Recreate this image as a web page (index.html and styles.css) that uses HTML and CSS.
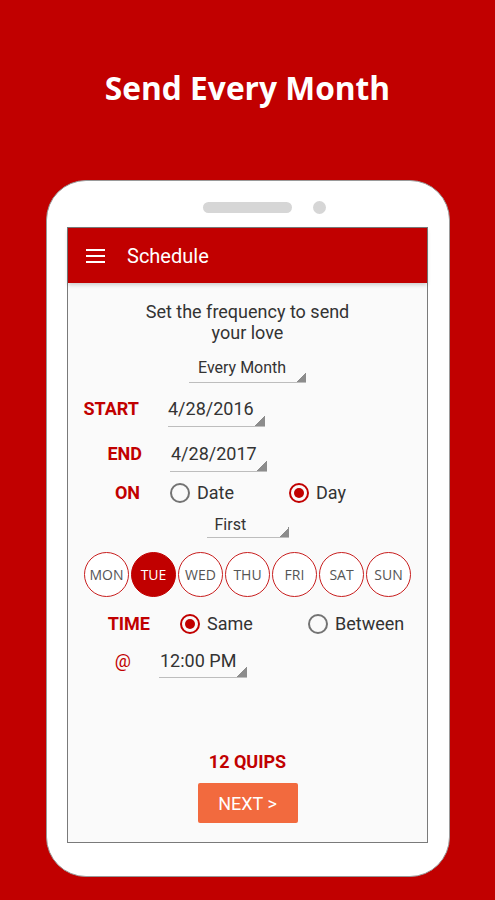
FILE: index.html
```html
<!DOCTYPE html>
<html>
<head>
<meta charset="utf-8">
<link rel="stylesheet" href="styles.css">
</head>
<body>
<h1 class="headline">Send Every Month</h1>
<div class="phone">
  <div class="sensors"><span class="speaker"></span><span class="camera"></span></div>
  <div class="screen">
    <header class="appbar">
      <svg class="menu" width="19" height="14" viewBox="0 0 19 14"><path d="M0 1H19M0 7H19M0 13H19" stroke="#fff" stroke-width="2"/></svg>
      <span class="appbar-title">Schedule</span>
    </header>
    <main class="content">
      <p class="intro">Set the frequency to send<br>your love</p>
      <div class="select select-freq">Every Month</div>
      <div class="row row-start"><span class="lbl">START</span><span class="select field">4/28/2016</span></div>
      <div class="row row-end"><span class="lbl">END</span><span class="select field">4/28/2017</span></div>
      <div class="row row-on">
        <span class="lbl">ON</span>
        <span class="opt opt-date"><span class="radio"></span>Date</span>
        <span class="opt"><span class="radio checked"></span>Day</span>
      </div>
      <div class="select select-first">First</div>
      <div class="days">
        <span class="day">MON</span>
        <span class="day active">TUE</span>
        <span class="day">WED</span>
        <span class="day">THU</span>
        <span class="day">FRI</span>
        <span class="day">SAT</span>
        <span class="day">SUN</span>
      </div>
      <div class="row row-time">
        <span class="lbl">TIME</span>
        <span class="opt opt-same"><span class="radio checked"></span>Same</span>
        <span class="opt"><span class="radio"></span>Between</span>
      </div>
      <div class="row row-at"><span class="lbl">@</span><span class="select field time">12:00 PM</span></div>
      <div class="quips">12 QUIPS</div>
      <button class="next">NEXT &gt;</button>
    </main>
  </div>
</div>
</body>
</html>
```

FILE: styles.css
```css
* { box-sizing: border-box; }
html, body { margin: 0; padding: 0; }
body {
  width: 495px;
  height: 900px;
  background: #c10000;
  font-family: Roboto, "Liberation Sans", sans-serif;
  overflow: hidden;
}
.headline {
  margin: 68px 0 0;
  font: 700 31.7px/40px "Open Sans", "Liberation Sans", sans-serif;
  color: #fff;
  text-align: center;
}
.phone {
  margin: 72px 0 0 46px;
  width: 404px;
  height: 697px;
  background: #fff;
  border: 1px solid #9a9a9a;
  border-radius: 40px;
  padding-top: 20px;
}
.sensors {
  display: flex;
  align-items: center;
  padding-left: 156px;
  height: 13px;
}
.speaker {
  width: 89px;
  height: 11px;
  border-radius: 6px;
  background: #d6d6d6;
}
.camera {
  width: 13px;
  height: 13px;
  border-radius: 50%;
  background: #d6d6d6;
  margin-left: 21px;
}
.screen {
  margin: 13px 0 0 20px;
  width: 361px;
  height: 616px;
  border: 1px solid #7a7a7a;
  background: #fafafa;
  display: flex;
  flex-direction: column;
}
.appbar {
  height: 55px;
  flex: none;
  background: #c10000;
  display: flex;
  align-items: center;
  padding-left: 18px;
  box-shadow: 0 2px 4px rgba(0,0,0,0.18);
  position: relative;
  z-index: 1;
}
.menu { display: block; }
.appbar-title {
  margin-left: 22px;
  color: #fff;
  font-size: 20px;
}
.content {
  display: flex;
  flex-direction: column;
  align-items: center;
  padding-top: 18px;
  color: #333;
}
.intro {
  margin: 0;
  font-size: 18px;
  line-height: 21px;
  text-align: center;
}
.select {
  display: block;
  font-size: 16px;
  line-height: 20px;
  border-bottom: 1px solid #bdbdbd;
  background: linear-gradient(to bottom right, transparent 50%, #8c8c8c 50%) no-repeat right bottom / 10px 10px;
}
.select-freq {
  margin-top: 15px;
  width: 117px;
  padding: 0 0 4px 9px;
}
.select-first {
  margin-top: 10px;
  width: 82px;
  padding: 0 0 2px 8px;
}
.row {
  align-self: stretch;
  display: flex;
  align-items: flex-start;
}
.lbl {
  color: #c10000;
  font-weight: 700;
  font-size: 18px;
  line-height: 20px;
  text-align: right;
  flex: none;
}
.field {
  font-size: 18px;
  width: 97px;
  padding: 0 0 7px 0;
  background-size: 10px 11px;
}
.row-start { margin-top: 16px; }
.row-start .lbl { width: 71px; margin-right: 29px; }
.row-end { margin-top: 17px; }
.row-end .lbl { width: 74px; margin-right: 28px; }
.row-end .field { padding-left: 1px; }
.row-on { margin-top: 9px; align-items: center; height: 24px; }
.row-on .lbl { width: 72px; margin-right: 30px; }
.row-time { margin-top: 15px; align-items: center; height: 24px; }
.row-time .lbl { width: 82px; margin-right: 30px; }
.row-at { margin-top: 15px; }
.row-at .lbl { width: 63px; margin-right: 28px; font-weight: 400; }
.time { width: 88px; padding: 0 0 6px 1px; }
.opt {
  display: flex;
  align-items: center;
  font-size: 18px;
  line-height: 24px;
}
.opt-date { width: 119px; }
.opt-same { width: 128px; }
.radio {
  width: 20px;
  height: 20px;
  border: 2px solid #737373;
  border-radius: 50%;
  margin-right: 7px;
  display: flex;
  align-items: center;
  justify-content: center;
}
.radio.checked { border-color: #c10000; }
.radio.checked::after {
  content: "";
  width: 10px;
  height: 10px;
  border-radius: 50%;
  background: #c10000;
}
.days {
  margin-top: 14px;
  display: flex;
  gap: 2px;
}
.day {
  width: 45px;
  height: 45px;
  border: 1.5px solid #c81e1e;
  border-radius: 50%;
  display: flex;
  align-items: center;
  justify-content: center;
  font: 14px "Open Sans", "Liberation Sans", sans-serif;
  color: #555;
  background: #fff;
}
.day.active {
  background: #c10000;
  border-color: #c10000;
  color: #fff;
}
.quips {
  margin-top: 74px;
  color: #c10000;
  font-weight: 700;
  font-size: 18px;
  line-height: 20px;
}
.next {
  margin-top: 11px;
  width: 100px;
  height: 40px;
  border: none;
  border-radius: 2px;
  background: #f26a3e;
  color: #fff;
  font-family: Roboto, "Liberation Sans", sans-serif;
  font-size: 18px;
  padding: 0;
}
```
